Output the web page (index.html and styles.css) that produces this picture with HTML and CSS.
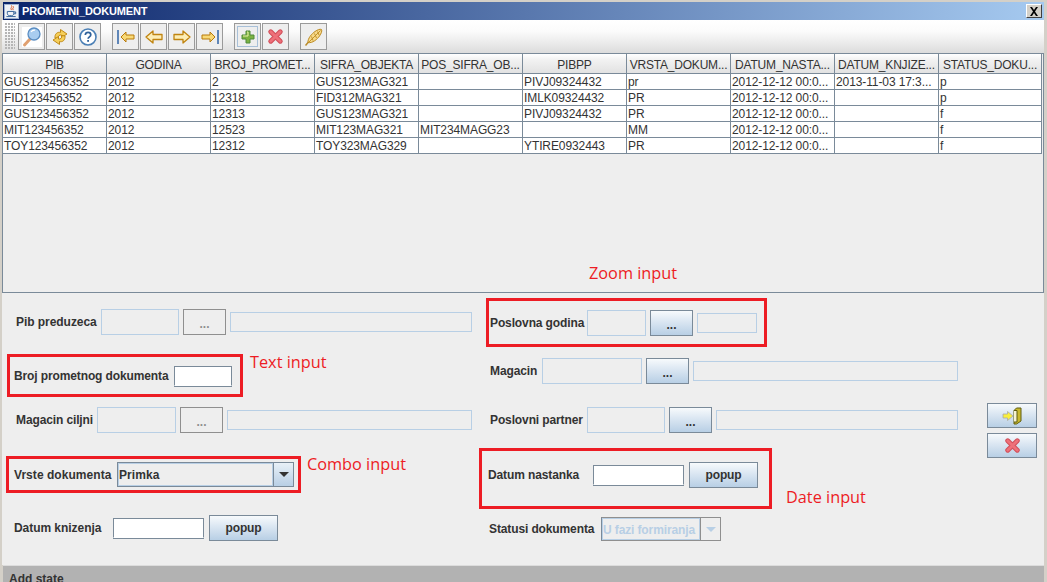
FILE: index.html
```html
<!DOCTYPE html>
<html lang="sr">
<head>
<meta charset="utf-8">
<title>PROMETNI_DOKUMENT</title>
<link rel="stylesheet" href="styles.css">
</head>
<body>
<svg class="defs" width="0" height="0" aria-hidden="true">
  <symbol id="i-del" viewBox="0 0 16 16">
    <path d="M3.500 3.500 12.500 12.500M12.500 3.500 3.500 12.500" fill="none" stroke="#d24f5a" stroke-width="4.600" stroke-linecap="round"/>
    <path d="M3.500 3.500 12.500 12.500M12.500 3.500 3.500 12.500" fill="none" stroke="#ee7079" stroke-width="2.600" stroke-linecap="round"/>
  </symbol>
</svg>
<div class="window">
  <header class="titlebar">
    <span class="java">
      <svg width="14" height="14" viewBox="0 0 14 14"><path d="M7 1c1.500 1.500-2 3 0 5M9 2c1 1.500-2 2 0 4" fill="none" stroke="#d9541e" stroke-width="1"/><path d="M2.500 7.500h7v2c0 1.500-1 2.500-2.500 2.500h-2c-1.500 0-2.500-1-2.500-2.500zM9.500 8h2v2h-2M1.500 13h10" fill="none" stroke="#2c5c94" stroke-width="1"/></svg>
    </span>
    <span class="title">PROMETNI_DOKUMENT</span>
    <button class="close" type="button">
      <svg width="10" height="9" viewBox="0 0 10 9"><path d="M1 0h2l2 3 2-3h2L6 4.500 9 9H7L5 6 3 9H1l3-4.500z" fill="#000"/></svg>
    </button>
  </header>

  <div class="toolbar">
    <span class="grip"></span>
    <div class="tgroup">
      <button class="tbtn" type="button">
        <svg width="22" height="22" viewBox="0 0 22 22"><rect x="1" y="1" width="20" height="20" fill="#fff"/><path d="M9 13 3.500 19" stroke="#e0a070" stroke-width="3" stroke-linecap="round"/><circle cx="13" cy="8" r="6" fill="#a9cdf0" stroke="#5a8dc2" stroke-width="1.300"/><path d="M10 6c1-1.500 2.500-2 4-1.800" stroke="#fff" stroke-width="1.200" fill="none"/></svg>
      </button>
      <button class="tbtn" type="button">
        <svg width="20" height="20" viewBox="0 0 20 20"><path d="M5 11C4.500 7 7.500 4.500 10.500 5.500V2.500L17 7l-5.500 3.500V8C9.500 7.500 8 9 8 11.500z" fill="#f6cf5a" stroke="#c08a18" stroke-linejoin="round"/><path d="M15 9c.5 4-2.500 6.500-5.500 5.500v3L3 13l5.500-3.500V12c2 .5 3.500-1 3.500-3.500z" fill="#f6cf5a" stroke="#c08a18" stroke-linejoin="round"/></svg>
      </button>
      <button class="tbtn" type="button">
        <svg width="20" height="20" viewBox="0 0 20 20"><circle cx="10" cy="10" r="8" fill="#fff" stroke="#4a7fb5" stroke-width="1.600"/><path d="M7.300 8c0-1.800 1.200-2.700 2.800-2.700S12.800 6.200 12.800 7.800c0 2-2.700 2.100-2.700 4" fill="none" stroke="#2f6199" stroke-width="1.700"/><rect x="9.200" y="13" width="1.800" height="1.800" fill="#2f6199"/></svg>
      </button>
    </div>
    <div class="tgroup">
      <button class="tbtn" type="button">
        <svg width="20" height="16" viewBox="0 0 20 16"><rect x="1" y="1" width="2" height="14" fill="#5f86b8"/><path d="M5 8 10 3v3h8v4h-8v3z" fill="#f8d977" stroke="#b87a0a" stroke-linejoin="round"/></svg>
      </button>
      <button class="tbtn" type="button">
        <svg width="20" height="16" viewBox="0 0 20 16"><path d="M2 8 9 2v3.500h9v5H9V14z" fill="#fdeeb5" stroke="#c08410" stroke-width="1.300" stroke-linejoin="round"/></svg>
      </button>
      <button class="tbtn" type="button">
        <svg width="20" height="16" viewBox="0 0 20 16"><path d="M18 8 11 2v3.500H2v5h9V14z" fill="#fdeeb5" stroke="#c08410" stroke-width="1.300" stroke-linejoin="round"/></svg>
      </button>
      <button class="tbtn" type="button">
        <svg width="20" height="16" viewBox="0 0 20 16"><rect x="17" y="1" width="2" height="14" fill="#5f86b8"/><path d="M15 8 10 3v3H2v4h8v3z" fill="#f8d977" stroke="#b87a0a" stroke-linejoin="round"/></svg>
      </button>
    </div>
    <div class="tgroup">
      <button class="tbtn tbtn-hover" type="button">
        <span class="hoverbox">
          <svg width="14" height="14" viewBox="0 0 14 14"><path d="M5 1h4v4h4v4H9v4H5V9H1V5h4z" fill="#7cb342" stroke="#4f8a3a" stroke-linejoin="round"/><path d="M6 2h1v4H2" fill="none" stroke="#e8f0a8"/></svg>
        </span>
      </button>
      <button class="tbtn" type="button"><svg class="ic-del" width="17" height="17"><use href="#i-del"/></svg></button>
    </div>
    <div class="tgroup">
      <button class="tbtn" type="button">
        <svg width="20" height="20" viewBox="0 0 20 20"><path d="M1.500 18.500 4.500 15" fill="none" stroke="#b88a2a" stroke-width="1.500"/><path d="M4 15.500C3.500 11.500 8 6.500 11 4.500 13.500 2.800 16 1.800 17.500 2.500 18.300 4 17.200 6.500 15.500 9 13.500 12 8.500 16.500 4 15.500Z" fill="#f6d98a" stroke="#bd8a20" stroke-linejoin="round"/><path d="M5 15 16.500 3.500M7.500 9.500 9 13.500M10.500 6.500 12.500 11M13.500 4.500 15 8" fill="none" stroke="#bd8a20" stroke-width=".9"/></svg>
      </button>
    </div>
  </div>

  <div class="tablepane">
    <table class="grid">
      <thead>
        <tr><th>PIB</th><th>GODINA</th><th>BROJ_PROMET...</th><th>SIFRA_OBJEKTA</th><th>POS_SIFRA_OB...</th><th>PIBPP</th><th>VRSTA_DOKUM...</th><th>DATUM_NASTA...</th><th>DATUM_KNJIZE...</th><th>STATUS_DOKU...</th></tr>
      </thead>
      <tbody>
        <tr><td>GUS123456352</td><td>2012</td><td>2</td><td>GUS123MAG321</td><td></td><td>PIVJ09324432</td><td>pr</td><td>2012-12-12 00:0...</td><td>2013-11-03 17:3...</td><td>p</td></tr>
        <tr><td>FID123456352</td><td>2012</td><td>12318</td><td>FID312MAG321</td><td></td><td>IMLK09324432</td><td>PR</td><td>2012-12-12 00:0...</td><td></td><td>p</td></tr>
        <tr><td>GUS123456352</td><td>2012</td><td>12313</td><td>GUS123MAG321</td><td></td><td>PIVJ09324432</td><td>PR</td><td>2012-12-12 00:0...</td><td></td><td>f</td></tr>
        <tr><td>MIT123456352</td><td>2012</td><td>12523</td><td>MIT123MAG321</td><td>MIT234MAGG23</td><td></td><td>MM</td><td>2012-12-12 00:0...</td><td></td><td>f</td></tr>
        <tr><td>TOY123456352</td><td>2012</td><td>12312</td><td>TOY323MAG329</td><td></td><td>YTIRE0932443</td><td>PR</td><td>2012-12-12 00:0...</td><td></td><td>f</td></tr>
      </tbody>
    </table>
  </div>

  <section class="form">
    <div class="col col-left">
      <div class="row l1">
        <label class="lbl lbl-pib">Pib preduzeca</label>
        <span class="ro f-78"></span>
        <button class="dots off" type="button">...</button>
        <span class="ro ro-text f-242"></span>
      </div>
      <div class="row l2 mark">
        <label class="lbl lbl-broj">Broj prometnog dokumenta</label>
        <span class="txt f-58"></span>
      </div>
      <div class="row l3">
        <label class="lbl lbl-mc">Magacin ciljni</label>
        <span class="ro f-79"></span>
        <button class="dots off" type="button">...</button>
        <span class="ro ro-text f-245"></span>
      </div>
      <div class="row l4 mark">
        <label class="lbl lbl-vd">Vrste dokumenta</label>
        <span class="combo">
          <span class="combo-val">Primka</span>
          <span class="combo-arrow"><i class="tri"></i></span>
        </span>
      </div>
      <div class="row l5">
        <label class="lbl lbl-dk">Datum knizenja</label>
        <span class="txt f-91"></span>
        <button class="pop" type="button">popup</button>
      </div>
    </div>

    <div class="col col-right">
      <div class="row r1 mark">
        <label class="lbl lbl-pg">Poslovna godina</label>
        <span class="ro f-59"></span>
        <button class="dots" type="button">...</button>
        <span class="ro ro-text f-60"></span>
      </div>
      <div class="row r2">
        <label class="lbl lbl-m">Magacin</label>
        <span class="ro f-100"></span>
        <button class="dots" type="button">...</button>
        <span class="ro ro-text f-265"></span>
      </div>
      <div class="row r3">
        <label class="lbl lbl-pp">Poslovni partner</label>
        <span class="ro f-78"></span>
        <button class="dots" type="button">...</button>
        <span class="ro ro-text f-242"></span>
      </div>
      <div class="row r4 mark">
        <label class="lbl lbl-dn">Datum nastanka</label>
        <span class="txt f-91"></span>
        <button class="pop" type="button">popup</button>
      </div>
      <div class="row r5">
        <label class="lbl lbl-sd">Statusi dokumenta</label>
        <span class="combo combo-off">
          <span class="combo-val">U fazi formiranja</span>
          <span class="combo-arrow"><i class="tri"></i></span>
        </span>
      </div>
    </div>

    <div class="actions">
      <button class="act" type="button">
        <svg width="20" height="18" viewBox="0 0 20 18"><path d="M12 3.500 14.500 1H19V14L14.500 17H12Z" fill="#c9b92e" stroke="#5f5c10"/><path d="M12 3.500H15V15H12" fill="#f6f3d2" stroke="#5f5c10"/><path d="M1 7H5.500V4.500L11 9 5.500 13.500V11H1Z" fill="#f9ef3c" stroke="#a8a8a8" stroke-width=".8"/></svg>
      </button>
      <button class="act" type="button"><svg class="ic-del" width="17" height="17"><use href="#i-del"/></svg></button>
    </div>

    <span class="note note-zoom">Zoom input</span>
    <span class="note note-text">Text input</span>
    <span class="note note-combo">Combo input</span>
    <span class="note note-date">Date input</span>
  </section>

  <footer class="status">Add state</footer>
</div>
</body>
</html>
```

FILE: styles.css
```css
* { box-sizing: border-box; }
html, body { margin: 0; height: 582px; overflow: hidden; }
body { background: #d4d0c8; font: 12px "Liberation Sans", Arial, sans-serif; color: #333; }
.defs { position: absolute; }
button { font-family: inherit; padding: 0; margin: 0; cursor: default; }

.window { display: flex; flex-direction: column; height: 582px; padding: 2px 3px 0 2px; }

.titlebar {
  flex: none; height: 18px; margin-left: 1px; display: flex; align-items: center; gap: 3px; padding: 0 2px 0 1px;
  background: linear-gradient(90deg, #0a246a, #a6caf0);
}
.java { width: 15px; height: 15px; background: #eef1f6; border: 1px solid #9db0cf; display: flex; align-items: center; justify-content: center; }
.title { color: #fff; font-size: 11px; font-weight: bold; letter-spacing: -.14px; flex: 1; }
.close {
  width: 16px; height: 14px; background: #d4d0c8; display: flex; align-items: center; justify-content: center;
  border: 1px solid; border-color: #fff #404040 #404040 #fff;
}

.toolbar {
  flex: none; height: 33px; display: flex; align-items: center; padding: 0 0 0 3px; gap: 11px;
  background: linear-gradient(#fff, #fbfbfb 35%, #dcdcdc);
}
.grip {
  width: 10px; height: 27px; margin-right: -8px;
  background-image: radial-gradient(circle at 1px 1px, #b5b5b5 0.8px, transparent 1px);
  background-size: 3px 3px;
}
.tgroup { display: flex; gap: 1px; }
.tbtn {
  width: 27px; height: 27px; background: #eee; border: 1px solid #9a9a9a; display: flex; align-items: center; justify-content: center;
}
.hoverbox { width: 21px; height: 21px; border: 1px solid #a8c0d8; display: flex; align-items: center; justify-content: center; }

.tablepane {
  flex: none; height: 240px; background: #eee; border: 1px solid #7a8a99; border-bottom-width: 1px;
}
.grid { border-collapse: separate; border-spacing: 0; table-layout: fixed; width: 1039px; }
.grid th, .grid td {
  width: 104px; overflow: hidden; white-space: nowrap; border-right: 1px solid #7a8a99; border-bottom: 1px solid #7a8a99;
}
.grid th:last-child, .grid td:last-child { width: 103px; }
.grid th {
  height: 20px; font-weight: normal; font-size: 12px; line-height: 14px; color: #333; text-align: center; padding: 2px 0 0; letter-spacing: -.2px;
  background: linear-gradient(#fff, #f2f2f2 30%, #e2e2e2);
}
.grid td { height: 16px; background: #fff; padding: 1px 0 0 1px; line-height: 14px; font-size: 12px; color: #333; letter-spacing: -.1px; }

.form { flex: 1; position: relative; display: flex; background: #eee; align-items: flex-start; }
.col { display: flex; flex-direction: column; flex: none; }
.col-left { width: 477px; }
.col-right { width: 508px; }

.row { display: flex; align-items: center; gap: 4px; flex: none; }
.mark { border: 3px solid #ed1c24; }

.l1 { margin: 16px 0 0 14px; height: 26px; }
.l2 { margin: 19px 0 0 5px; width: 236px; height: 43px; padding-left: 4px; }
.l3 { margin: 10px 0 0 14px; height: 26px; }
.l4 { margin: 23px 0 0 4px; width: 295px; height: 37px; padding-left: 5px; }
.l5 { margin: 22px 0 0 12px; height: 26px; }

.r1 { margin: 5px 0 0 7px; width: 281px; height: 49px; padding-left: 1px; }
.r2 { margin: 11px 0 0 11px; height: 26px; }
.r3 { margin: 23px 0 0 11px; height: 26px; }
.r4 { margin: 15px 0 0 0; width: 293px; height: 61px; padding: 0 0 8px 6px; }
.r5 { margin: 8px 0 0 10px; height: 24px; }

.lbl { font-weight: bold; font-size: 12px; color: #333; white-space: nowrap; flex: none; letter-spacing: -.12px; }
.lbl-pib { width: 81px; letter-spacing: -.05px; }
.lbl-broj { width: 156px; }
.lbl-mc { width: 77px; }
.lbl-vd { width: 99px; letter-spacing: .05px; }
.lbl-dk { width: 95px; letter-spacing: -.05px; }
.lbl-pg { width: 93px; }
.lbl-m { width: 48px; }
.lbl-pp { width: 93px; }
.lbl-dn { width: 101px; }
.lbl-sd { width: 108px; }

.ro { display: block; height: 26px; border: 1px solid #b8cfe5; flex: none; }
.ro-text { height: 20px; }
.f-58 { width: 58px; }
.f-59 { width: 59px; }
.f-60 { width: 60px; }
.f-78 { width: 78px; }
.f-79 { width: 79px; }
.f-91 { width: 91px; }
.f-100 { width: 100px; }
.f-242 { width: 242px; }
.f-245 { width: 245px; }
.f-265 { width: 265px; }

.txt {
  display: block; height: 20px; background: #fff; flex: none;
  border: 1px solid #7a8a99; border-bottom-color: #fff; box-shadow: 0 1px 0 #7a8a99;
}

.dots, .pop, .act {
  background: linear-gradient(#f7fafc, #dde8f3 40%, #b8cfe5);
  border: 1px solid #7a8a99; color: #333; font-weight: bold; font-size: 12px;
  display: flex; align-items: center; justify-content: center; flex: none;
}
.dots { width: 43px; height: 26px; padding-top: 4px; line-height: 1; }
.dots.off { background: #eee; border-color: #8f8f8f; color: #8f8f8f; }
.pop { width: 69px; height: 26px; margin-left: 1px; letter-spacing: -.1px; }

.combo { display: flex; height: 25px; border: 1px solid #7a8a99; flex: none; width: 177px; background: #eee; }
.combo-val { flex: 1; padding-left: 0; line-height: 22px; font-weight: bold; letter-spacing: .1px; border: 1px solid #b8cfe5; white-space: nowrap; overflow: hidden; }
.combo-arrow {
  width: 20px; flex: none; display: flex; align-items: center; justify-content: center;
  background: linear-gradient(#e8f0f7, #b8cfe5); border-left: 1px solid #7a8a99;
}
.tri { width: 0; height: 0; border-left: 5px solid transparent; border-right: 5px solid transparent; border-top: 5px solid #333; }
.combo-off { width: 120px; height: 24px; border-color: #8f8f8f #8f8f8f #8f8f8f #7a8a99; }
.combo-off .combo-val { color: #b8cfe5; letter-spacing: -.12px; }
.combo-off .combo-arrow { background: #eee; border-left-color: #8f8f8f; }
.combo-off .tri { border-top-color: #b8cfe5; }

.actions { display: flex; flex-direction: column; gap: 5px; margin-top: 110px; flex: none; }
.act { width: 50px; height: 25px; }

.note { position: absolute; color: #ed1c24; font: 16.3px/20px "Open Sans", "Noto Sans", sans-serif; white-space: nowrap; }
.note-zoom { left: 587px; top: -30px; }
.note-text { left: 248px; top: 59px; }
.note-combo { left: 305px; top: 161px; }
.note-date { left: 784px; top: 194px; }

.status {
  flex: none; height: 17px; margin-left: 1px; background: #b2b2b2; border-top: 1px solid #dcdcdc;
  font-weight: bold; padding: 6px 0 0 6px; line-height: 14px; overflow: hidden; color: #333;
}
```
